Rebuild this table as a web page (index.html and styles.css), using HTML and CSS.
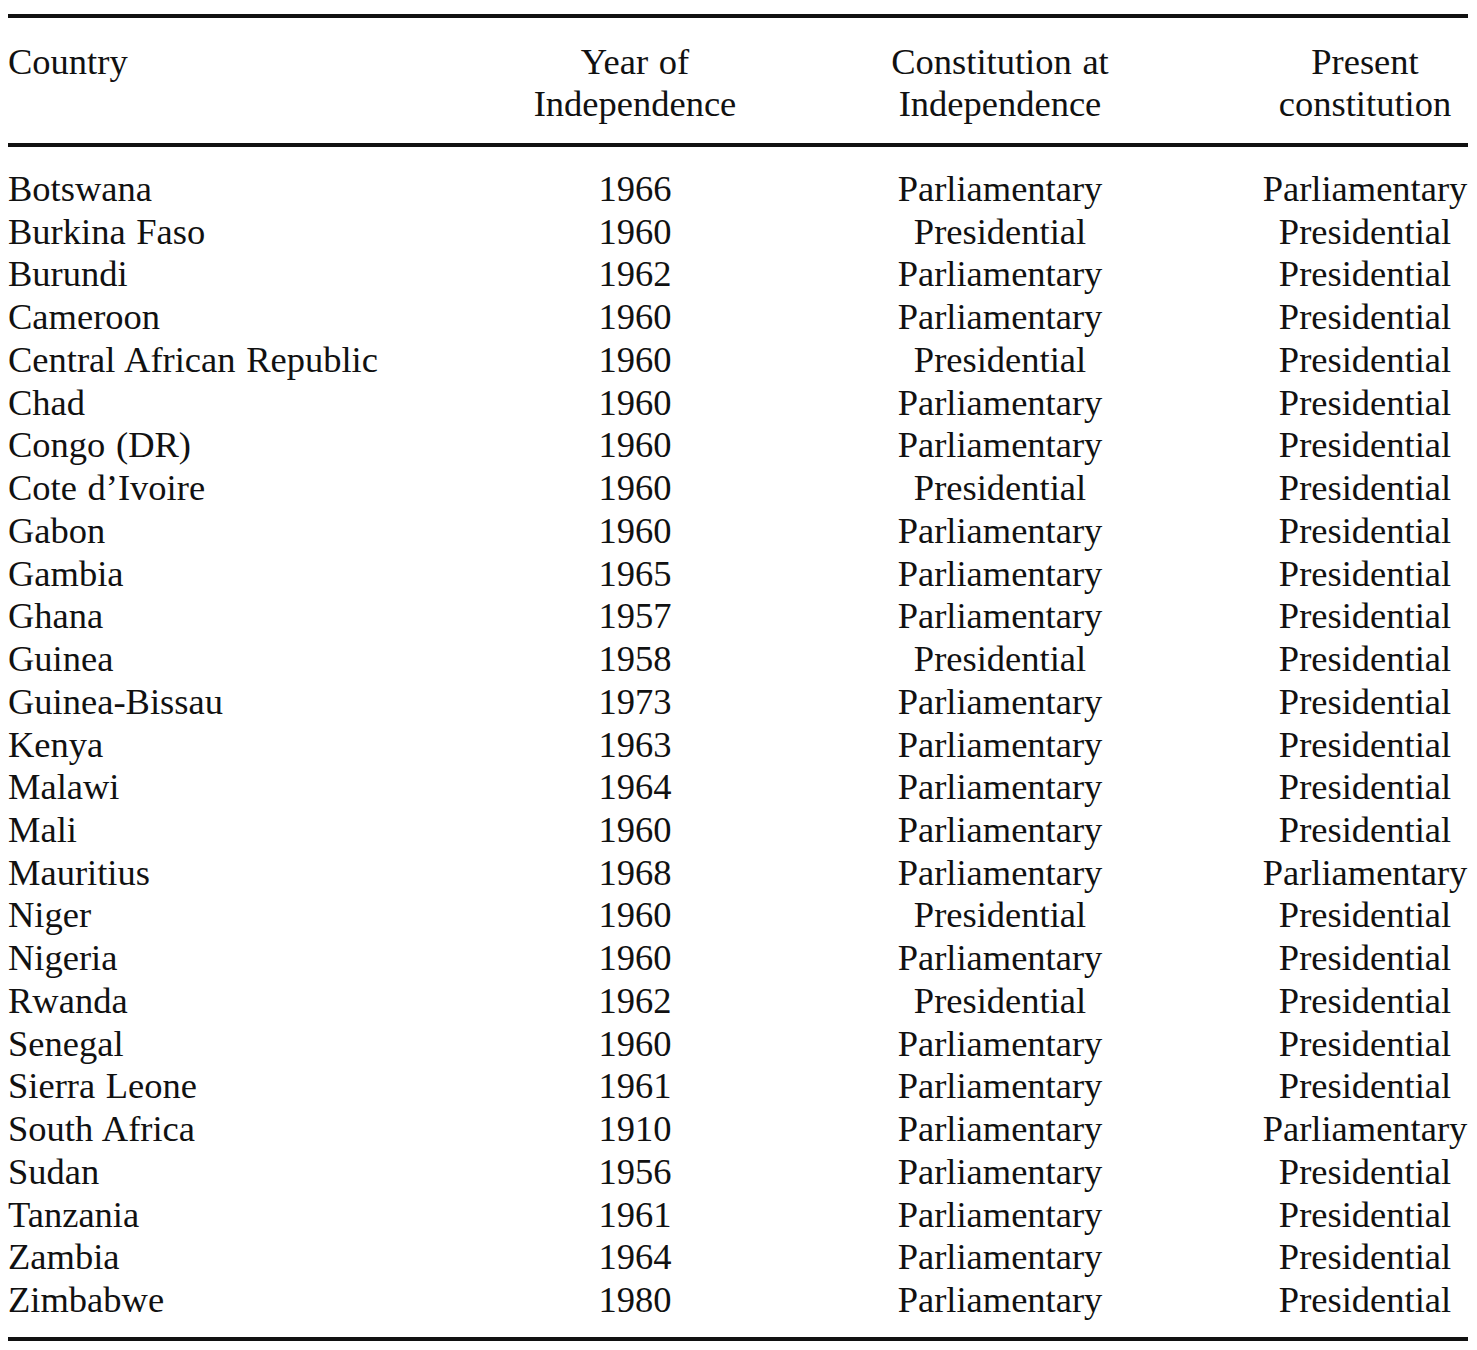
FILE: index.html
```html
<!DOCTYPE html>
<html lang="en">
<head>
<meta charset="utf-8">
<title>Constitutions at Independence</title>
<link rel="stylesheet" href="styles.css">
</head>
<body>
<div class="table">
  <div class="head">
    <div class="row">
      <div class="c1">Country</div>
      <div class="c2">Year of<br>Independence</div>
      <div class="c3">Constitution at<br>Independence</div>
      <div class="c4">Present<br>constitution</div>
    </div>
  </div>
  <div class="body">
    <div class="row"><div class="c1">Botswana</div><div class="c2">1966</div><div class="c3">Parliamentary</div><div class="c4">Parliamentary</div></div>
    <div class="row"><div class="c1">Burkina Faso</div><div class="c2">1960</div><div class="c3">Presidential</div><div class="c4">Presidential</div></div>
    <div class="row"><div class="c1">Burundi</div><div class="c2">1962</div><div class="c3">Parliamentary</div><div class="c4">Presidential</div></div>
    <div class="row"><div class="c1">Cameroon</div><div class="c2">1960</div><div class="c3">Parliamentary</div><div class="c4">Presidential</div></div>
    <div class="row"><div class="c1">Central African Republic</div><div class="c2">1960</div><div class="c3">Presidential</div><div class="c4">Presidential</div></div>
    <div class="row"><div class="c1">Chad</div><div class="c2">1960</div><div class="c3">Parliamentary</div><div class="c4">Presidential</div></div>
    <div class="row"><div class="c1">Congo (DR)</div><div class="c2">1960</div><div class="c3">Parliamentary</div><div class="c4">Presidential</div></div>
    <div class="row"><div class="c1">Cote d’Ivoire</div><div class="c2">1960</div><div class="c3">Presidential</div><div class="c4">Presidential</div></div>
    <div class="row"><div class="c1">Gabon</div><div class="c2">1960</div><div class="c3">Parliamentary</div><div class="c4">Presidential</div></div>
    <div class="row"><div class="c1">Gambia</div><div class="c2">1965</div><div class="c3">Parliamentary</div><div class="c4">Presidential</div></div>
    <div class="row"><div class="c1">Ghana</div><div class="c2">1957</div><div class="c3">Parliamentary</div><div class="c4">Presidential</div></div>
    <div class="row"><div class="c1">Guinea</div><div class="c2">1958</div><div class="c3">Presidential</div><div class="c4">Presidential</div></div>
    <div class="row"><div class="c1">Guinea-Bissau</div><div class="c2">1973</div><div class="c3">Parliamentary</div><div class="c4">Presidential</div></div>
    <div class="row"><div class="c1">Kenya</div><div class="c2">1963</div><div class="c3">Parliamentary</div><div class="c4">Presidential</div></div>
    <div class="row"><div class="c1">Malawi</div><div class="c2">1964</div><div class="c3">Parliamentary</div><div class="c4">Presidential</div></div>
    <div class="row"><div class="c1">Mali</div><div class="c2">1960</div><div class="c3">Parliamentary</div><div class="c4">Presidential</div></div>
    <div class="row"><div class="c1">Mauritius</div><div class="c2">1968</div><div class="c3">Parliamentary</div><div class="c4">Parliamentary</div></div>
    <div class="row"><div class="c1">Niger</div><div class="c2">1960</div><div class="c3">Presidential</div><div class="c4">Presidential</div></div>
    <div class="row"><div class="c1">Nigeria</div><div class="c2">1960</div><div class="c3">Parliamentary</div><div class="c4">Presidential</div></div>
    <div class="row"><div class="c1">Rwanda</div><div class="c2">1962</div><div class="c3">Presidential</div><div class="c4">Presidential</div></div>
    <div class="row"><div class="c1">Senegal</div><div class="c2">1960</div><div class="c3">Parliamentary</div><div class="c4">Presidential</div></div>
    <div class="row"><div class="c1">Sierra Leone</div><div class="c2">1961</div><div class="c3">Parliamentary</div><div class="c4">Presidential</div></div>
    <div class="row"><div class="c1">South Africa</div><div class="c2">1910</div><div class="c3">Parliamentary</div><div class="c4">Parliamentary</div></div>
    <div class="row"><div class="c1">Sudan</div><div class="c2">1956</div><div class="c3">Parliamentary</div><div class="c4">Presidential</div></div>
    <div class="row"><div class="c1">Tanzania</div><div class="c2">1961</div><div class="c3">Parliamentary</div><div class="c4">Presidential</div></div>
    <div class="row"><div class="c1">Zambia</div><div class="c2">1964</div><div class="c3">Parliamentary</div><div class="c4">Presidential</div></div>
    <div class="row"><div class="c1">Zimbabwe</div><div class="c2">1980</div><div class="c3">Parliamentary</div><div class="c4">Presidential</div></div>
  </div>
</div>
</body>
</html>
```
FILE: styles.css
```css
html, body {
  margin: 0;
  padding: 0;
  background: #ffffff;
}

body {
  font-family: "Liberation Serif", "Times New Roman", serif;
  font-size: 36.5px;
  line-height: 42.73px;
  word-spacing: 1.5px;
  color: #111111;
}

.table {
  margin: 14px 0 0 8px;
  width: 1460px;
  border-top: 4px solid #111111;
  border-bottom: 4px solid #111111;
}

.head {
  padding: 22.5px 0 17px;
  border-bottom: 4px solid #111111;
}

.body {
  padding: 21px 0 15.5px;
}

.row {
  display: grid;
  grid-template-columns: 427px 400px 330px 303px;
}

.c1 {
  text-align: left;
  white-space: nowrap;
}

.c2,
.c3 {
  text-align: center;
  white-space: nowrap;
}

.c4 {
  padding-left: 97px;
  text-align: center;
  white-space: nowrap;
}
```
